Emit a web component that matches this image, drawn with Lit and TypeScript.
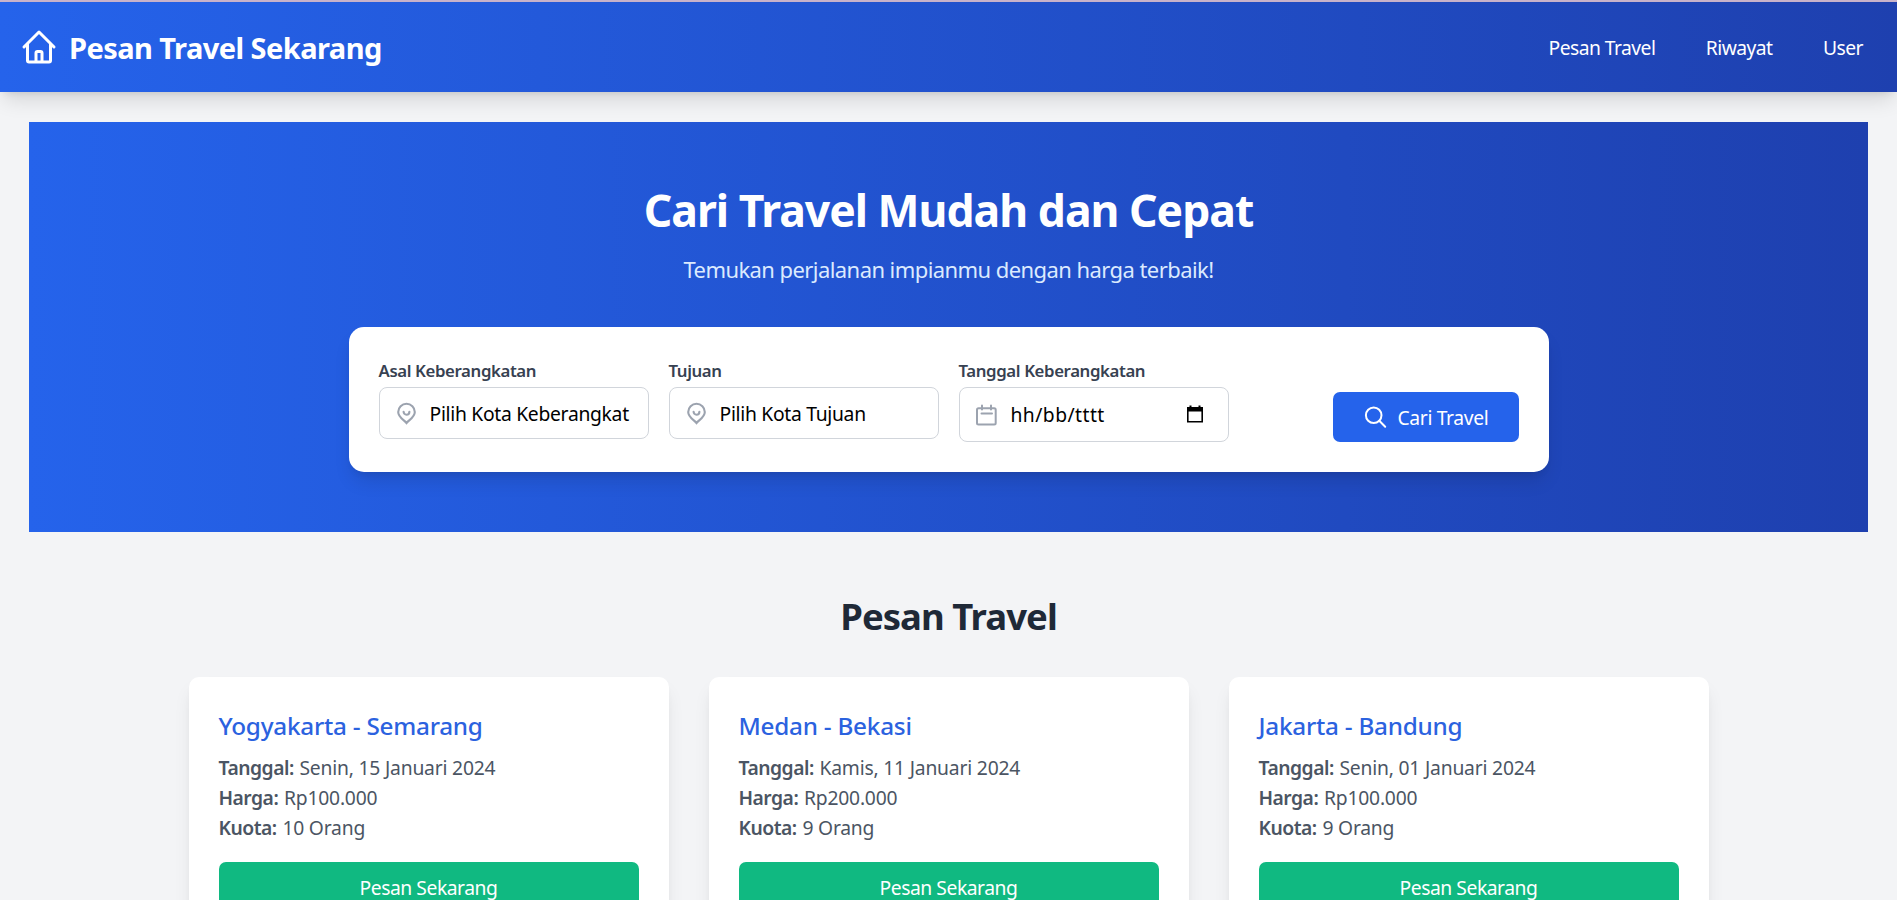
import { LitElement, html, css, svg } from "lit";
import { customElement } from "lit/decorators.js";

interface Trip { route: string; date: string; price: string; quota: string; }

const trips: Trip[] = [
  { route: "Yogyakarta - Semarang", date: "Senin, 15 Januari 2024", price: "Rp100.000", quota: "10 Orang" },
  { route: "Medan - Bekasi", date: "Kamis, 11 Januari 2024", price: "Rp200.000", quota: "9 Orang" },
  { route: "Jakarta - Bandung", date: "Senin, 01 Januari 2024", price: "Rp100.000", quota: "9 Orang" },
];

const pin = svg`<path d="M10.500 21C8.300 18.200 2.200 15.300 2.200 10a8.300 8.200 0 0 1 16.600 0C18.800 15.300 12.700 18.200 10.500 21Z"/><path stroke-linecap="round" d="M7.600 9.800a2.900 2.900 0 0 0 5.800 0"/>`;

@customElement("app-root")
export class AppRoot extends LitElement {
  static styles = css`
    :host { display: block; height: 900px; overflow: hidden; background: #f3f4f6; font-family: "Noto Sans", "Open Sans", sans-serif; font-size: 19.3px; line-height: 30px; letter-spacing: -0.25px; }
    * { box-sizing: border-box; }
    svg { display: block; fill: none; stroke: currentColor; flex: none; }
    h1, h2, h3, p { margin: 0; }
    .topline { height: 2px; background: #c9b3cb; }
    .nav { height: 90px; display: flex; align-items: center; justify-content: space-between; padding: 0 34px 0 20px; color: #fff; background: linear-gradient(to right, #2563eb, #1e40af); box-shadow: 0 12px 19px -4px rgba(0,0,0,.12), 0 5px 8px -5px rgba(0,0,0,.12); }
    .brand { display: flex; align-items: center; gap: 11px; font-size: 29px; font-weight: 700; letter-spacing: -0.55px; }
    .brand span { padding-top: 2px; }
    .links { display: flex; gap: 50.5px; letter-spacing: -0.55px; padding-top: 2px; }
    .hero { margin: 30px 29px 0; height: 410px; padding-top: 58px; text-align: center; color: #fff; background: linear-gradient(to right, #2563eb, #1e40af); }
    .hero h1 { font-size: 44.5px; line-height: 60px; letter-spacing: -1px; }
    .sub { margin-top: 12px; font-size: 22px; line-height: 35px; color: #dbeafe; letter-spacing: -0.57px; }
    .search { width: 1200px; height: 145px; margin: 40px auto 0; padding: 30px; display: flex; gap: 20px; border-radius: 15px; background: #fff; text-align: left; box-shadow: 0 12px 19px -4px rgba(0,0,0,.12), 0 5px 8px -5px rgba(0,0,0,.12); }
    .field { width: 270px; }
    .label { display: block; font-size: 16.8px; line-height: 25px; margin: 1px 0 4px; font-weight: 600; letter-spacing: -0.38px; color: #374151; white-space: nowrap; }
    .box { display: flex; align-items: center; height: 52px; padding: 0 15px; border: 1px solid #d1d5db; border-radius: 8px; color: #000; }
    .box.date { height: 55px; }
    .box svg { color: #9ca3af; }
    .value { margin-left: 13px; flex: 1; white-space: nowrap; padding-top: 1px; letter-spacing: -0.29px; }
    .date .value { letter-spacing: 0.45px; margin-left: 12px; }
    .box .picker { color: #000; margin-right: 9px; }
    .go { display: flex; align-items: center; gap: 10px; margin: 35px 0 0 auto; width: 186px; height: 50px; padding-left: 30px; border-radius: 7px; background: #2563eb; color: #fff; white-space: nowrap; letter-spacing: -0.36px; }
    .go span { padding-top: 2px; }
    .title { margin-top: 59px; text-align: center; font-size: 36.5px; line-height: 50px; font-weight: 700; letter-spacing: -0.95px; color: #1f2937; }
    .cards { width: 1520px; margin: 36px auto 0; display: grid; grid-template-columns: repeat(3, 1fr); gap: 40px; }
    .card { height: 290px; padding: 30px; border-radius: 10px; background: #fff; color: #4b5563; box-shadow: 0 12px 19px -4px rgba(0,0,0,.1), 0 5px 8px -5px rgba(0,0,0,.1); }
    .card h3 { font-size: 24.3px; line-height: 38px; margin-bottom: 8px; font-weight: 550; letter-spacing: -0.24px; color: #2b62df; }
    .card b { font-weight: 600; letter-spacing: -0.5px; margin-right: 1px; }
    .card p span { letter-spacing: -0.2px; }
    .order { margin-top: 19px; height: 50px; border-radius: 7px; background: #10b981; color: #fff; text-align: center; line-height: 52px; letter-spacing: -0.46px; }
  `;

  private card(t: Trip) {
    return html`<article class="card">
      <h3>${t.route}</h3>
      <p><b>Tanggal:</b> <span>${t.date}</span></p>
      <p><b>Harga:</b> <span>${t.price}</span></p>
      <p><b>Kuota:</b> <span>${t.quota}</span></p>
      <div class="order"><span>Pesan Sekarang</span></div>
    </article>`;
  }

  render() {
    return html`
      <div class="topline"></div>
      <header class="nav">
        <div class="brand">
          <svg width="38" height="38" viewBox="0 0 38 38" stroke-width="3" stroke-linejoin="round" stroke-linecap="round"><path d="M4 19 19 4 34 19M7.500 16.500V32.500a1.500 1.500 0 0 0 1.500 1.500H29a1.500 1.500 0 0 0 1.500-1.500V16.500M16 33.500V25a1.500 1.500 0 0 1 1.500-1.500h3a1.500 1.500 0 0 1 1.500 1.500V33.500"/></svg>
          <span>Pesan Travel Sekarang</span>
        </div>
        <nav class="links"><span>Pesan Travel</span><span>Riwayat</span><span>User</span></nav>
      </header>
      <section class="hero">
        <h1><span>Cari Travel Mudah dan Cepat</span></h1>
        <p class="sub"><span>Temukan perjalanan impianmu dengan harga terbaik!</span></p>
        <div class="search">
          <div class="field"><span class="label">Asal Keberangkatan</span><div class="box"><svg width="22" height="24" viewBox="-1 -1 22 24" stroke-width="2.100">${pin}</svg><span class="value">Pilih Kota Keberangkat</span></div></div>
          <div class="field"><span class="label">Tujuan</span><div class="box"><svg width="22" height="24" viewBox="-1 -1 22 24" stroke-width="2.100">${pin}</svg><span class="value">Pilih Kota Tujuan</span></div></div>
          <div class="field"><span class="label">Tanggal Keberangkatan</span><div class="box date">
            <svg width="24" height="24" viewBox="0 0 24 24" stroke-width="2" stroke-linecap="round"><rect x="2" y="5.200" width="18.700" height="16.300" rx="1.500"/><path d="M7 2.500v4M16 2.500v4M6.500 10.500h10.500"/></svg>
            <span class="value">hh/bb/tttt</span>
            <svg class="picker" width="18" height="20" viewBox="0 0 18 20"><path stroke-width="1.600" d="M1.800 3h14.400v13.700H1.800z"/><path fill="currentColor" stroke="none" d="M1 2h16v4.500H1zM3.500.500h2V3h-2zM12.500.500h2V3h-2z"/></svg>
          </div></div>
          <div class="go"><svg width="25" height="25" viewBox="0 0 25 25" stroke-width="2" stroke-linecap="round"><circle cx="10.700" cy="10.200" r="7.800"/><path d="m16.300 15.800 5.900 5.900"/></svg><span>Cari Travel</span></div>
        </div>
      </section>
      <h2 class="title"><span>Pesan Travel</span></h2>
      <section class="cards">${trips.map((t) => this.card(t))}</section>
    `;
  }
}
